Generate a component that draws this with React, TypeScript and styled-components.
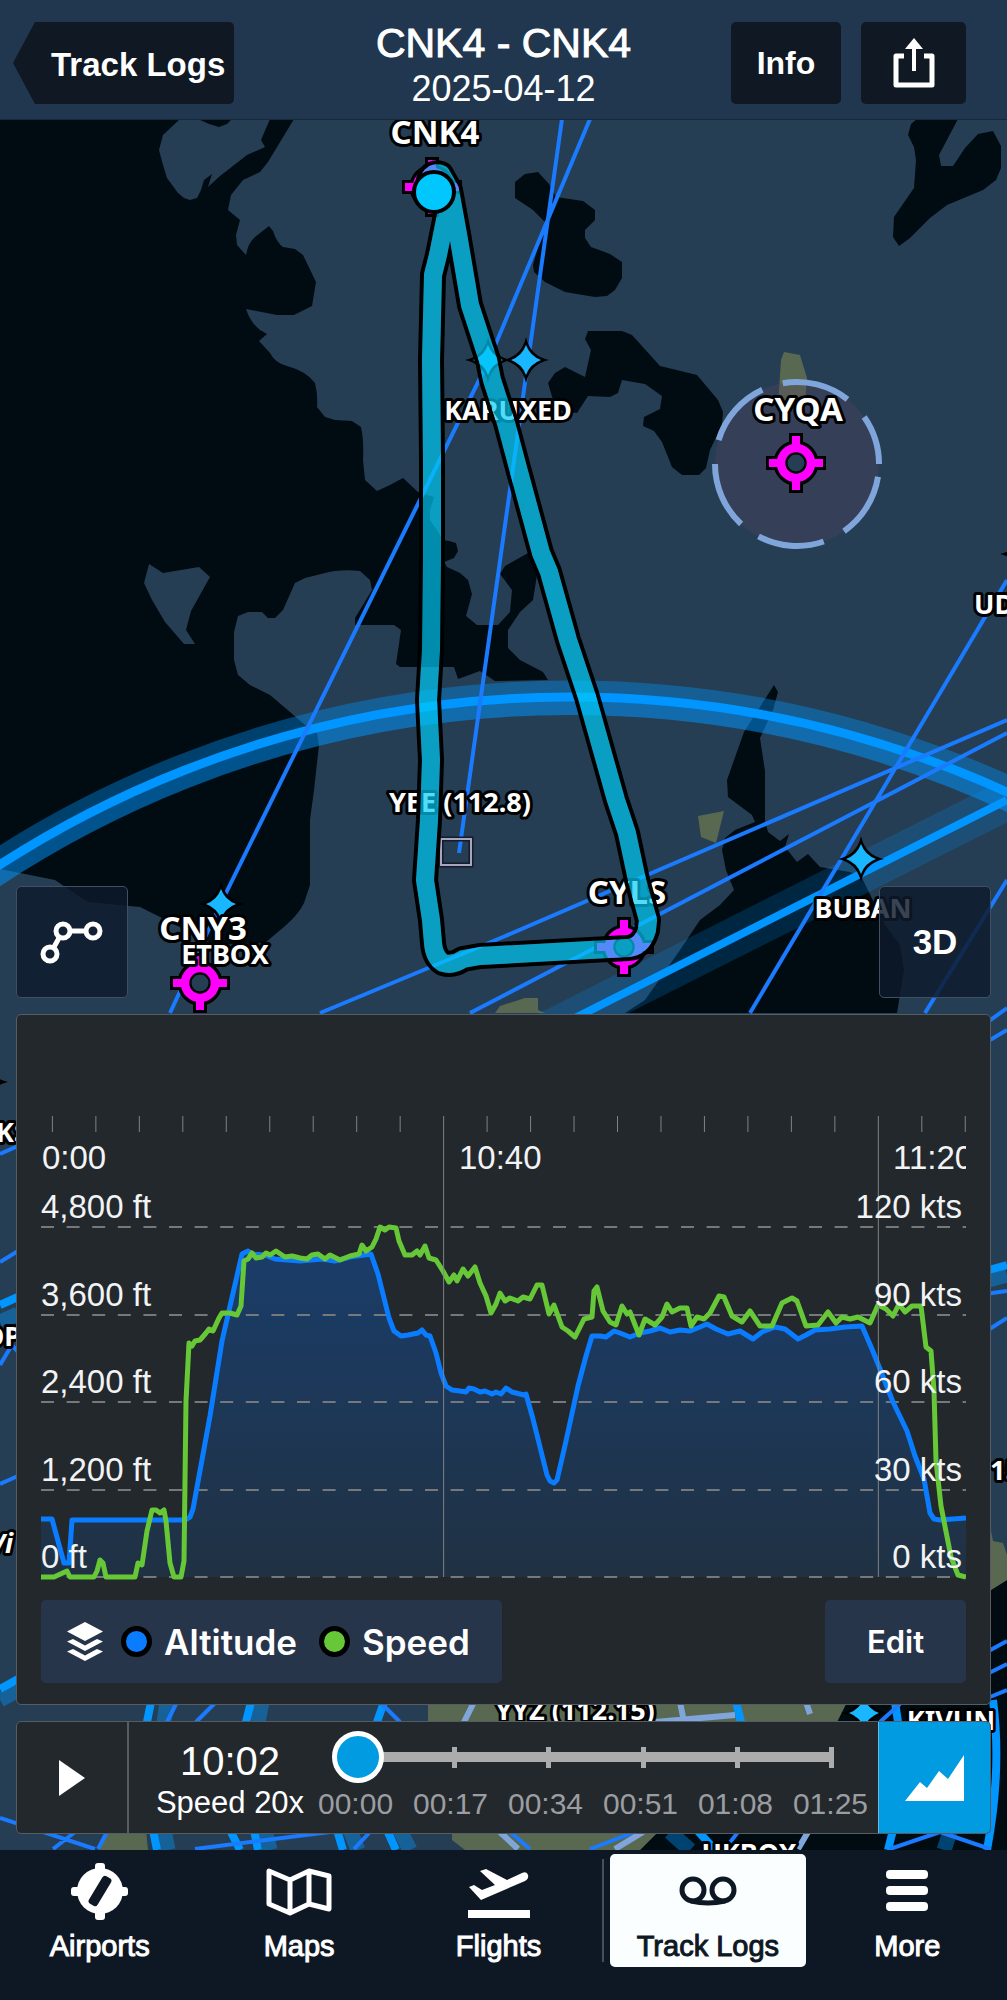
import React, { useState } from "react";
import styled, { createGlobalStyle, css } from "styled-components";

const sans = `"Liberation Sans", Arial, Helvetica, sans-serif`;
const system = `Inter, "Liberation Sans", sans-serif`;
const mapFont = `"Noto Sans", "Open Sans", sans-serif`;

const colors = {
  header: "#20374f",
  button: "#0f1823",
  land: "#253e54",
  water: "#000c12",
  urban: "#596951",
  airway: "#1a7bff",
  airspace: "#0095ff",
  fix: "#18b7ff",
  field: "#ff00ff",
  panel: "#23282d",
  panelLine: "#565c62",
  chip: "#27354b",
  accent: "#009be0",
  altitude: "#0a7cff",
  speed: "#66c837",
  nav: "#0e1824",
};

const GlobalStyle = createGlobalStyle`
  *, *::before, *::after { box-sizing: border-box; }
  body { margin: 0; background: ${colors.nav}; font-family: ${sans}; color: #fff; }
  button { font: inherit; color: inherit; border: 0; padding: 0; cursor: pointer; }
`;

const Page = styled.div`
  display: flex;
  flex-direction: column;
  min-height: 100vh;
`;

/* Header */

const Header = styled.header`
  display: grid;
  grid-template-columns: 1fr auto 1fr;
  align-items: start;
  padding: 22px 41px 10px;
  background: ${colors.header};
  border-bottom: 1px solid #16293b;
`;

const BackButton = styled.button`
  justify-self: start;
  height: 82px;
  margin-left: -28px;
  padding: 4px 9px 0 38px;
  border-radius: 5px;
  background: ${colors.button};
  clip-path: polygon(0 50%, 22px 0, 100% 0, 100% 100%, 22px 100%);
  font-size: 33px;
  font-weight: 700;
`;

const TitleBlock = styled.div`
  text-align: center;
`;

const Title = styled.h1`
  margin: 0;
  font-size: 41px;
  line-height: 42px;
  font-weight: 400;
  -webkit-text-stroke: 1px #fff;
`;

const Subtitle = styled.p`
  margin: 5px 0 0;
  font-size: 36px;
  line-height: 40px;
`;

const HeaderActions = styled.div`
  display: flex;
  justify-content: flex-end;
  gap: 20px;
`;

const HeaderButton = styled.button<{ $width: number }>`
  display: grid;
  place-items: center;
  width: ${(p) => p.$width}px;
  height: 82px;
  border-radius: 5px;
  background: ${colors.button};
  font-size: 32px;
  font-weight: 700;
`;

/* Map stage */

const Stage = styled.main`
  position: relative;
  flex: 1;
  display: flex;
  flex-direction: column;
  justify-content: flex-end;
  gap: 16px;
  padding: 16px;
  overflow: hidden;
  background: ${colors.land};
`;

const MapCanvas = styled.svg`
  position: absolute;
  inset: 0;
  width: 100%;
  height: 100%;
`;

const MapLabel = styled.text<{ $large?: boolean }>`
  font-family: ${mapFont};
  font-weight: 700;
  font-size: ${(p) => (p.$large ? 33 : 27)}px;
  fill: #fff;
  stroke: #000;
  stroke-width: 6px;
  stroke-linejoin: round;
  paint-order: stroke;
`;

const MapControls = styled.div`
  position: relative;
  display: flex;
  justify-content: space-between;
`;

const MapButton = styled.button`
  display: grid;
  place-items: center;
  width: 112px;
  height: 112px;
  border: 1px solid #405062;
  border-radius: 5px;
  background: rgba(13, 26, 44, 0.82);
  font-size: 35px;
  font-weight: 700;
`;

const panelSurface = css`
  position: relative;
  border: 1px solid ${colors.panelLine};
  border-radius: 5px;
  background: ${colors.panel};
`;

const ChartPanel = styled.section`
  ${panelSurface}
  padding: 101px 24px 21px;
`;

const ChartSvg = styled.svg`
  display: block;
  width: 100%;
  height: auto;
`;

const ChartText = styled.text`
  font-family: ${sans};
  font-size: 33px;
  fill: #f2f3f4;
`;

const PanelFooter = styled.div`
  display: flex;
  justify-content: space-between;
  margin-top: 18px;
`;

const Legend = styled.button`
  display: flex;
  align-items: center;
  height: 83px;
  padding: 0 32px 0 25px;
  border-radius: 5px;
  background: ${colors.chip};
  font-family: ${system};
  font-size: 35px;
  font-weight: 600;
`;

const LegendItem = styled.span`
  display: flex;
  align-items: center;
  gap: 12px;
  margin-left: 17px;

  & + & {
    margin-left: 22px;
  }
`;

const Dot = styled.span<{ $color: string }>`
  width: 31px;
  height: 31px;
  border: 5px solid #000;
  border-radius: 50%;
  background: ${(p) => p.$color};
`;

const EditButton = styled.button`
  width: 141px;
  height: 83px;
  border-radius: 5px;
  background: ${colors.chip};
  font-family: ${system};
  font-size: 31px;
  font-weight: 600;
`;

/* Player */

const Player = styled.section`
  ${panelSurface}
  display: flex;
  height: 113px;
  overflow: hidden;
`;

const PlayButton = styled.button`
  display: grid;
  place-items: center;
  width: 112px;
  background: transparent;
  border-right: 2px solid ${colors.panelLine};
`;

const Clock = styled.div`
  width: 202px;
  padding-top: 15px;
  text-align: center;
`;

const ClockTime = styled.div`
  font-size: 40px;
  line-height: 48px;
`;

const ClockSpeed = styled.div`
  font-size: 31px;
  line-height: 36px;
`;

const Timeline = styled.div`
  flex: 1;
  padding: 9px 10px 0 3px;
`;

const Scrubber = styled.div`
  position: relative;
  margin: 0 8px 0 -2px;
  height: 52px;
`;

const Rail = styled.div`
  position: absolute;
  inset: 0 26px;
  display: flex;
  align-items: center;
  justify-content: space-between;

  &::before {
    content: "";
    position: absolute;
    left: 0;
    right: 0;
    height: 10px;
    background: #acacac;
  }
`;

const RailTick = styled.span`
  width: 5px;
  height: 21px;
  background: #acacac;
`;

const Range = styled.input`
  appearance: none;
  position: relative;
  display: block;
  width: 100%;
  height: 52px;
  margin: 0;
  background: transparent;

  &::-webkit-slider-thumb {
    appearance: none;
    width: 52px;
    height: 52px;
    border: 5px solid #fff;
    border-radius: 50%;
    background: ${colors.accent};
  }
`;

const TimeLabels = styled.div`
  display: flex;
  justify-content: space-between;
  margin-left: -16px;
  font-size: 30px;
  line-height: 34px;
  padding-top: 4px;
  color: #9b9da0;
`;

const ChartToggle = styled.button`
  display: grid;
  place-items: center;
  width: 112px;
  border-left: 1px solid #6cb9de;
  background: ${colors.accent};
`;

/* Bottom navigation */

const Nav = styled.nav`
  display: flex;
  height: 150px;
  padding-top: 4px;
  background: ${colors.nav};
`;

const Tab = styled.a<{ $active?: boolean }>`
  flex: 1 1 0;
  display: flex;
  flex-direction: column;
  align-items: center;
  height: 113px;
  margin: 0 2px;
  border-radius: 5px;
  font-size: 29px;
  line-height: 36px;
  text-decoration: none;
  color: ${(p) => (p.$active ? colors.nav : "#fff")};
  background: ${(p) => (p.$active ? "#fbfefe" : "transparent")};
  -webkit-text-stroke: 1px currentColor;

  svg {
    height: 74px;
  }
`;

const NavDivider = styled.span`
  width: 2px;
  height: 103px;
  margin: 5px 4px 0;
  background: #464e58;
`;

/* Map drawing */

const Airfield = ({ x, y }: { x: number; y: number }) => (
  <g transform={`translate(${x} ${y})`}>
    <path d="M0-30V30M-30 0H30" stroke="#000" strokeWidth="14" />
    <circle r="15.5" fill={colors.land} stroke="#000" strokeWidth="14" />
    <path d="M0-27V-15M0 15V27M-27 0H-15M15 0H27" stroke={colors.field} strokeWidth="8" />
    <circle r="15" fill="none" stroke={colors.field} strokeWidth="8.5" />
  </g>
);

const Fix = ({ x, y }: { x: number; y: number }) => (
  <g transform={`translate(${x} ${y})`}>
    <path d="M0-23Q4-4 23 0Q4 4 0 23Q-4 4-23 0Q-4-4 0-23Z" fill="#000" />
    <path d="M0-15Q4-4 15 0Q4 4 0 15Q-4 4-15 0Q-4-4 0-15Z" fill={colors.fix} />
  </g>
);

const arc = (cx: number, cy: number, r: number, from: number, to: number) => {
  const at = (deg: number) => {
    const a = (deg * Math.PI) / 180;
    return `${cx + r * Math.sin(a)} ${cy - r * Math.cos(a)}`;
  };
  return `M${at(from)}A${r} ${r} 0 0 1 ${at(to)}`;
};

const zoneDashes = [[-10, 38], [55, 90], [99, 145], [161, 208], [223, 270], [287, 335]];

const water = [
  "M0 119H180L163 135L159 150L163 165L167 178L178 193L184 198L190 200L197 198L201 190L204 180L212 174L208 187L220 176L247 155L265 147L261 140L270 119H294L268 162L260 172L243 180L231 195L228 210L240 220L236 235L237 245L246 255Q248 243 255 237L269 226L273 231Q277 243 283 247L295 249L303 255L316 282L312 306L294 315H277L246 309Q250 322 260 330L267 334L259 341L270 353Q275 363 287 366Q306 371 315 383Q318 395 317 407L325 417L335 420L352 421L361 427Q364 440 363 460L365 480L377 491L390 485L403 478L418 492L434 497L430 510L430 520L437 530L443 540L449 541L456 543L458 551L454 558L444 562L447 567L460 573L468 580L472 594L466 616L477 625H498L510 612L512 590L500 574L505 566L530 552L537 575L533 600L520 612L508 630V648L520 660L543 672L548 680L495 681L480 671L458 679L454 667H400L396 664L401 630L394 625H355V618L372 590L370 580L360 571Q340 569 325 573L305 578L295 583L283 610L275 618L268 618L262 612H248L238 616L234 632V660L238 675L250 685L270 695L290 712L305 725L317 733L319 745L314 790L310 820V885L304 903Q298 915 285 926L265 943L215 945L160 917L140 907L88 902L80 897L55 880L0 869Z",
  "M198 119L209 124L219 127L227 124L232 119Z",
  "M515 182L525 174L538 172L549 184L556 197L583 201L595 210V220L585 230V238L591 247L610 254L622 262V278L615 290L607 296L595 297L565 292L545 282L534 272L533 265L545 222L533 210L515 198Z",
  "M588 331H622L632 335L660 366L697 375L718 400L723 412L722 425L710 450L706 468L699 475H682L672 467L662 442L654 431L643 426L644 417L660 409L662 396L645 384L622 380L618 393L610 397L588 396L577 413L556 410L548 383L555 373L565 367L585 377L591 350L585 339Z",
  "M911 124L917 119H958L939 155L941 166H953L965 148L978 134L993 131L1001 146V168L996 180L983 190L947 205L930 218L910 238L899 246L893 237L894 217L914 188L916 160L914 147L908 135Z",
  "M774 685L778 692L773 710L760 738L765 771V820L768 832L780 841L789 834L785 847L797 862L808 854L820 867L850 872L862 878L885 925L900 945L904 970L897 1013H625L645 1000L680 950L700 920L720 905L734 890L726 870L722 850L725 838L735 830L755 822L752 815L728 797L727 780L744 732Z",
  "M1007 1580L991 1590V1850H1007Z",
  "M848 1700L837 1722H1007V1700ZM660 1830L640 1850H1007V1830Z",
].join("");

const islands = "M149 564L163 573L199 567L210 577L191 611L186 630L195 644H184L165 622L152 600L144 583Z";

const urban =
  "M784 352L800 355L807 378L805 405H778L781 360ZM698 816L724 811L716 843L701 837ZM495 1013L500 1006L525 998H538V1010L545 1013ZM991 1531L993 1541L1003 1543L1007 1555V1580L991 1590ZM428 1700H848L837 1722H428ZM107 1830H146L148 1850H100ZM452 1830H660L640 1850H465L452 1840Z";

const airways =
  "M562 119L459 853M590 119L489 360L221 903L170 1013M1007 580L750 1013M1007 720L503 937L320 1013M1007 733L470 1013M1007 880L925 1013M985 1024L1007 1008M985 1043L1007 1030M985 1294L1007 1291M985 1332L1007 1318M985 1653L1007 1641M985 1675L1007 1664M985 1699L1007 1690M0 1154L18 1146M0 1262L18 1251M0 1365L12 1345L18 1352M0 1484L18 1476M0 1818L95 1849M75 1832L53 1849M107 1832L98 1849M195 1849L330 1832M370 1832L354 1849M177 1702L167 1722M216 1702L196 1722M380 1702L400 1722M510 1832L530 1849M635 1832L590 1849M738 1832L725 1849M880 1722L900 1704M940 1832L890 1849M940 1832L990 1849";

const brightLines =
  "M575 1018L1007 800M985 1271L1007 1265M0 1305L18 1297M0 1689L18 1679M151 1702L147 1722M251 1702L246 1722M384 1702L377 1722M153 1830L157 1850M230 1830L240 1850M254 1830L258 1850M337 1830L343 1850M387 1830L396 1850M736 1702L741 1722M895 1702L898 1722M697 1830L715 1850M893 1830L888 1850M993 1700Q1002 1770 987 1850";

const track =
  "M434 192L429 180Q432 171 441 174L450 190L458 234L470 305L488 360L492 380L506 423L518 468L541 553L549 572L568 640L587 697L616 800L627 833L637 880L648 920L647 930Q642 947 628 948L590 950L480 956L463 959Q453 966 443 963Q434 957 433 943L431 920L425 880L429 820L431 760L428 700L431 650L432 560V460L431 360L433 275L438 255L446 215";

function MapView() {
  return (
    <MapCanvas viewBox="0 120 1007 1730" preserveAspectRatio="xMidYMin slice" role="img" aria-label="Flight track map">
      <defs>
        <mask id="outside-track" maskUnits="userSpaceOnUse" x="0" y="119" width="1007" height="1731">
          <rect y="119" width="1007" height="1731" fill="#fff" />
          <path d={track} fill="none" stroke="#000" strokeWidth="18" strokeLinecap="round" strokeLinejoin="round" />
        </mask>
      </defs>

      <rect y="119" width="1007" height="1731" fill={colors.land} />
      <path d={water} fill={colors.water} />
      <path d={islands} fill={colors.land} />
      <path d={urban} fill={colors.urban} />

      <circle cx="797" cy="464" r="82" fill="#57415f" fillOpacity="0.32" />
      <g fill="none" stroke="#7fa5da" strokeWidth="6">
        {zoneDashes.map(([from, to]) => (
          <path key={from} d={arc(797, 464, 82, from, to)} />
        ))}
      </g>

      <g fill="none" stroke={colors.airspace}>
        <circle cx="570" cy="1748" r="1060" strokeWidth="15" strokeOpacity="0.38" />
        <circle cx="570" cy="1748" r="1040" strokeWidth="14" strokeOpacity="0.52" />
        <path d="M475 1068L1007 800" strokeWidth="40" strokeOpacity="0.2" />
        <path d="M985 1281L1007 1275M0 1322L18 1314M0 1700L18 1690M167 1702L164 1722M262 1702L258 1722M164 1830L168 1850M265 1830L270 1850M350 1830L358 1850M400 1830L410 1850M670 1832L690 1850M950 1832L944 1850" strokeWidth="15" strokeOpacity="0.4" />
        <circle cx="570" cy="1748" r="1051" strokeWidth="9" />
        <path d={brightLines} strokeWidth="8" />
      </g>
      <path d={airways} fill="none" stroke={colors.airway} strokeWidth="4" />
      <path d="M680 1702L684 1722M806 1702L810 1714M655 1722L735 1715M464 1722L474 1702M500 1832L518 1849M643 1832L615 1849M808 1832L798 1849" fill="none" stroke="#7fa5da" strokeWidth="6" />

      <Fix x={488} y={360} />
      <Fix x={526} y={360} />
      <Fix x={221} y={904} />
      <Fix x={861} y={859} />
      <Fix x={864} y={1713} />
      <Fix x={1023} y={554} />
      <Fix x={-15} y={1082} />

      <Airfield x={432} y={187} />
      <Airfield x={796} y={463} />
      <Airfield x={200} y={983} />
      <Airfield x={624} y={947} />

      <rect x="441" y="839" width="30" height="26" fill="none" stroke="#141b2a" strokeWidth="5" />
      <rect x="441" y="839" width="30" height="26" fill="none" stroke="#aaa5bf" strokeWidth="2" />

      <MapLabel $large x="435" y="144" textAnchor="middle">CNK4</MapLabel>
      <MapLabel $large x="798" y="421" textAnchor="middle">CYQA</MapLabel>
      <MapLabel $large x="203" y="940" textAnchor="middle">CNY3</MapLabel>
      <MapLabel $large x="627" y="904" textAnchor="middle">CYLS</MapLabel>
      <MapLabel x="508" y="420" textAnchor="middle">KARUXED</MapLabel>
      <MapLabel x="460" y="812" textAnchor="middle">YEE (112.8)</MapLabel>
      <MapLabel x="225" y="964" textAnchor="middle">ETBOX</MapLabel>
      <MapLabel x="863" y="918" textAnchor="middle">BUBAN</MapLabel>
      <MapLabel x="974" y="614">UD</MapLabel>
      <MapLabel x="-4" y="1142">KS</MapLabel>
      <MapLabel x="-17" y="1346">OP</MapLabel>
      <MapLabel x="-11" y="1553" fontStyle="italic">Vi</MapLabel>
      <MapLabel x="990" y="1480">15</MapLabel>
      <MapLabel x="575" y="1720" textAnchor="middle">YYZ (112.15)</MapLabel>
      <MapLabel x="951" y="1730" textAnchor="middle">KIVUN</MapLabel>
      <MapLabel x="749" y="1863" textAnchor="middle">UKBOX</MapLabel>

      <path d={track} fill="none" stroke="#000" strokeWidth="26" strokeLinecap="round" strokeLinejoin="round" mask="url(#outside-track)" />
      <path d={track} fill="none" stroke="#00ccf8" strokeOpacity="0.68" strokeWidth="18" strokeLinecap="round" strokeLinejoin="round" />
      <circle cx="434" cy="192" r="20" fill="#00c8ff" stroke="#000" strokeWidth="4" />
    </MapCanvas>
  );
}

/* Chart */

const altitudeLine =
  "M41 1518L52 1518L64 1562L69 1562L72 1519L105 1519L185 1519L190 1516L193 1508L210 1415L222 1340L242 1253L248 1250L252 1253L265 1254L275 1258L300 1260L322 1258L335 1260L350 1256L371 1253L378 1273L389 1317L394 1330L401 1335L408 1334L418 1332L422 1329L426 1334L430 1335L436 1352L441 1372L446 1385L452 1389L460 1390L466 1391L469 1387L474 1388L480 1391L485 1390L492 1393L496 1391L501 1393L506 1387L512 1391L524 1394L526 1393L533 1418L541 1450L547 1474L550 1480L554 1482L557 1479L566 1440L578 1385L586 1355L592 1335L600 1335L606 1336L614 1330L620 1332L630 1336L640 1332L650 1330L660 1327L670 1331L680 1329L690 1330L700 1326L707 1323L716 1328L728 1333L740 1330L753 1338L762 1331L775 1326L785 1328L798 1338L806 1334L815 1329L830 1328L845 1326L862 1325L872 1348L880 1368L893 1401L907 1430L915 1455L924 1478L930 1512L934 1518L940 1519L966 1517";

const speedLine =
  "M41 1576L54 1576L67 1570L70 1576L94 1576L97 1570L100 1559L103 1562L106 1576L135 1576L138 1562L142 1564L147 1530L152 1509L156 1509L160 1512L164 1509L166 1520L170 1562L174 1576L181 1576L184 1560L186 1400L189 1342L192 1345L195 1340L200 1339L206 1332L209 1328L213 1330L219 1317L222 1312L230 1312L237 1314L241 1305L244 1260L248 1258L252 1252L256 1257L262 1256L266 1252L270 1254L276 1250L285 1256L292 1255L300 1257L307 1258L312 1254L318 1253L325 1258L330 1254L340 1259L350 1255L359 1253L362 1244L366 1250L372 1246L376 1238L380 1226L385 1229L389 1226L396 1227L399 1240L405 1254L412 1254L417 1250L420 1254L425 1245L429 1257L436 1259L443 1270L449 1281L454 1274L457 1280L463 1268L468 1275L475 1266L480 1282L486 1295L491 1312L496 1303L500 1292L505 1300L510 1297L518 1300L523 1296L530 1298L537 1284L542 1284L549 1313L554 1304L562 1326L568 1330L575 1336L584 1318L592 1316L594 1290L597 1286L603 1310L610 1321L616 1324L622 1305L627 1313L630 1311L639 1334L645 1318L655 1324L662 1316L667 1303L672 1311L680 1307L687 1307L691 1325L697 1316L704 1318L710 1312L719 1295L724 1296L732 1315L742 1321L750 1310L760 1325L772 1325L782 1302L792 1297L797 1300L806 1325L818 1324L828 1311L836 1322L842 1316L850 1318L858 1316L870 1322L878 1304L886 1308L893 1315L899 1303L905 1311L912 1305L921 1305L926 1346L931 1350L934 1390L936 1460L941 1505L951 1556L958 1574L966 1576";

const levels = [
  { y: 1226, feet: "4,800 ft", knots: "120 kts" },
  { y: 1314, feet: "3,600 ft", knots: "90 kts" },
  { y: 1401, feet: "2,400 ft", knots: "60 kts" },
  { y: 1489, feet: "1,200 ft", knots: "30 kts" },
  { y: 1576, feet: "0 ft", knots: "0 kts" },
];

function ProfileChart() {
  const ticks = Array.from({ length: 22 }, (_, i) => 52.4 + i * 43.47);
  return (
    <ChartSvg viewBox="41 1115 925 466" role="img" aria-label="Altitude and speed profile">
      <defs>
        <linearGradient id="altitude-fill" x1="0" y1="0" x2="0" y2="1">
          <stop offset="0" stopColor="#1a3d69" />
          <stop offset="1" stopColor="#203143" />
        </linearGradient>
      </defs>
      <path d={`${altitudeLine}V1576H41Z`} fill="url(#altitude-fill)" />
      {levels.map((l) => (
        <line key={l.y} x1="41" x2="966" y1={l.y} y2={l.y} stroke="#76797c" strokeWidth="2" strokeDasharray="13 12.6" />
      ))}
      <path d={altitudeLine} fill="none" stroke={colors.altitude} strokeWidth="5" strokeLinejoin="round" />
      <path d={speedLine} fill="none" stroke={colors.speed} strokeWidth="5" strokeLinejoin="round" />
      {ticks.map((x, i) => (
        <line key={x} x1={x} x2={x} y1="1115" y2={i === 9 || i === 19 ? 1576 : 1131} stroke="#808284" strokeWidth="1" />
      ))}
      {levels.map((l) => (
        <g key={l.y}>
          <ChartText x="41" y={l.y - 9}>{l.feet}</ChartText>
          <ChartText x="962" y={l.y - 9} textAnchor="end">{l.knots}</ChartText>
        </g>
      ))}
      <ChartText x="42" y="1168">0:00</ChartText>
      <ChartText x="459" y="1168">10:40</ChartText>
      <ChartText x="893" y="1168">11:20</ChartText>
    </ChartSvg>
  );
}

const times = ["00:00", "00:17", "00:34", "00:51", "01:08", "01:25"];

export default function App() {
  const [position, setPosition] = useState(0);
  return (
    <Page>
      <GlobalStyle />
      <Header>
        <BackButton type="button">Track Logs</BackButton>
        <TitleBlock>
          <Title>CNK4 - CNK4</Title>
          <Subtitle>2025-04-12</Subtitle>
        </TitleBlock>
        <HeaderActions>
          <HeaderButton type="button" $width={110}>Info</HeaderButton>
          <HeaderButton type="button" $width={105} aria-label="Share">
            <svg width="44" height="52" viewBox="0 0 44 52" fill="none" stroke="#fff" strokeWidth="5">
              <path d="M12 19H4V48H40V19H32" strokeLinejoin="round" />
              <path d="M22 34V8" strokeWidth="4" />
              <path d="M22 1L31 12H13Z" fill="#fff" stroke="none" />
            </svg>
          </HeaderButton>
        </HeaderActions>
      </Header>

      <Stage>
        <MapView />
        <MapControls>
          <MapButton type="button" aria-label="Route">
            <svg width="64" height="44" viewBox="0 0 64 44" fill="none" stroke="#fff" strokeWidth="5">
              <path d="M14 27L19 18M30 11H45" />
              <circle cx="10" cy="34" r="7" />
              <circle cx="23" cy="11" r="7" />
              <circle cx="53" cy="11" r="7" />
            </svg>
          </MapButton>
          <MapButton type="button">3D</MapButton>
        </MapControls>

        <ChartPanel>
          <ProfileChart />
          <PanelFooter>
            <Legend type="button">
              <svg width="38" height="42" viewBox="0 0 38 42" fill="#fff">
                <path d="M19 1L37 10.500L19 20L1 10.500Z" />
                <path d="M1 20.500L7 18L19 24.500L31 18L37 20.500L19 30Z" />
                <path d="M1 30.500L7 28L19 34.500L31 28L37 30.500L19 40Z" />
              </svg>
              <LegendItem>
                <Dot $color={colors.altitude} />
                Altitude
              </LegendItem>
              <LegendItem>
                <Dot $color={colors.speed} />
                Speed
              </LegendItem>
            </Legend>
            <EditButton type="button">Edit</EditButton>
          </PanelFooter>
        </ChartPanel>

        <Player>
          <PlayButton type="button" aria-label="Play">
            <svg width="26" height="36" viewBox="0 0 26 36">
              <path d="M0 0L26 18L0 36Z" fill="#fff" />
            </svg>
          </PlayButton>
          <Clock>
            <ClockTime>10:02</ClockTime>
            <ClockSpeed>Speed 20x</ClockSpeed>
          </Clock>
          <Timeline>
            <Scrubber>
              <Rail>
                {times.map((t) => (
                  <RailTick key={t} />
                ))}
              </Rail>
              <Range
                type="range"
                min={0}
                max={85}
                value={position}
                aria-label="Playback position"
                onChange={(e) => setPosition(Number(e.target.value))}
              />
            </Scrubber>
            <TimeLabels>
              {times.map((t) => (
                <span key={t}>{t}</span>
              ))}
            </TimeLabels>
          </Timeline>
          <ChartToggle type="button" aria-label="Toggle chart">
            <svg width="60" height="46" viewBox="0 0 60 46">
              <path d="M0 46L15 27L22 33L34 16L43 24L59 0V46Z" fill="#fff" />
            </svg>
          </ChartToggle>
        </Player>
      </Stage>

      <Nav>
        <Tab href="#airports">
          <svg width="58" height="74" viewBox="0 0 58 74" stroke="none">
            <rect x="24" y="9" width="10" height="57" rx="3" fill="#fff" />
            <rect x="0" y="33" width="57" height="9" rx="3" fill="#fff" />
            <circle cx="29" cy="37" r="23" fill="#fff" />
            <rect x="24" y="21" width="10" height="32" rx="3" fill={colors.nav} transform="rotate(31 29 37)" />
          </svg>
          Airports
        </Tab>
        <Tab href="#maps">
          <svg width="66" height="74" viewBox="0 0 66 74" fill="none" stroke="#fff" strokeWidth="5" strokeLinejoin="round">
            <path d="M3 17V50L24 59L43 50L63 55V22L43 17L24 26ZM24 26V59M43 17V50" />
          </svg>
          Maps
        </Tab>
        <Tab href="#flights">
          <svg width="64" height="74" viewBox="0 0 64 74" fill="#fff" stroke="none">
            <rect x="1" y="56" width="62" height="8" />
            <path d="M13 17L19 15L40 26L55 19Q60 17 61 21Q62 25 58 27L14 46L2 33L7 31L15 36L28 31Z" />
          </svg>
          Flights
        </Tab>
        <NavDivider />
        <Tab href="#track-logs" $active aria-current="page">
          <svg width="58" height="74" viewBox="0 0 58 74" fill="none" stroke={colors.nav} strokeWidth="5">
            <circle cx="14" cy="36" r="11" />
            <circle cx="44" cy="36" r="11" />
            <path d="M12 47Q29 51 46 47" />
          </svg>
          Track Logs
        </Tab>
        <Tab href="#more">
          <svg width="44" height="74" viewBox="0 0 44 74" fill="#fff" stroke="none">
            <rect x="1" y="16" width="42" height="9" rx="4" />
            <rect x="1" y="32" width="42" height="9" rx="4" />
            <rect x="1" y="48" width="42" height="9" rx="4" />
          </svg>
          More
        </Tab>
      </Nav>
    </Page>
  );
}
